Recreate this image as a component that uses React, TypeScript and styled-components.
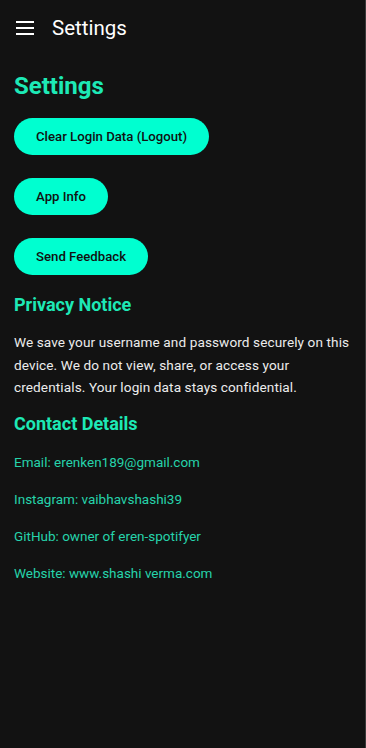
import React from "react";
import styled, { createGlobalStyle } from "styled-components";

const GlobalStyle = createGlobalStyle`
	html, body {
		margin: 0;
		padding: 0;
		background: #121212;
	}
	body {
		font-family: Roboto, "Noto Sans", "Liberation Sans", sans-serif;
	}
`;

const contacts = [
	"Email: erenken189@gmail.com",
	"Instagram: vaibhavshashi39",
	"GitHub: owner of eren-spotifyer",
	"Website: www.shashi verma.com",
];

const buttons = ["Clear Login Data (Logout)", "App Info", "Send Feedback"];

export default function App() {
	return (
		<>
			<GlobalStyle />
			<Screen>
				<TopBar>
					<MenuButton aria-label="menu">
						<svg width="18" height="14" viewBox="0 0 18 14">
							<rect x="0" y="0" width="18" height="2" fill="#fff" />
							<rect x="0" y="6" width="18" height="2" fill="#fff" />
							<rect x="0" y="12" width="18" height="2" fill="#fff" />
						</svg>
					</MenuButton>
					<BarTitle>Settings</BarTitle>
				</TopBar>

				<Content>
					<PageTitle>Settings</PageTitle>
					<ButtonList>
						{buttons.map((b) => (
							<PillButton key={b}>{b}</PillButton>
						))}
					</ButtonList>

					<SectionTitle>Privacy Notice</SectionTitle>
					<Paragraph>
						We save your username and password securely on this device. We do not view, share, or access your
						credentials. Your login data stays confidential.
					</Paragraph>

					<SectionTitle $tight>Contact Details</SectionTitle>
					<ContactList>
						{contacts.map((c) => (
							<ContactItem key={c}>{c}</ContactItem>
						))}
					</ContactList>
				</Content>
			</Screen>
		</>
	);
}

const Screen = styled.div`
	width: 366px;
	height: 748px;
	box-sizing: border-box;
	background: #121212;
	border-right: 1px solid #3a3a3a;
	overflow: hidden;
`;

const TopBar = styled.header`
	display: flex;
	align-items: center;
	height: 56px;
	padding-left: 16px;
`;

const MenuButton = styled.button`
	display: flex;
	align-items: center;
	justify-content: center;
	width: 18px;
	height: 18px;
	padding: 0;
	border: none;
	background: transparent;
`;

const BarTitle = styled.h1`
	margin: 0 0 0 18px;
	font-size: 20.5px;
	font-weight: 400;
	color: #ffffff;
`;

const Content = styled.main`
	padding: 14px 14px 0;
`;

const PageTitle = styled.h2`
	margin: 0;
	font-size: 24px;
	line-height: 32px;
	font-weight: 700;
	color: #1de9b6;
`;

const ButtonList = styled.div`
	display: flex;
	flex-direction: column;
	align-items: flex-start;
	gap: 23px;
	margin-top: 16px;
`;

const PillButton = styled.button`
	height: 37px;
	padding: 0 22px;
	border: none;
	border-radius: 19px;
	background: #00ffd0;
	color: #111;
	font-family: inherit;
	font-size: 13.2px;
	font-weight: 500;
`;

const SectionTitle = styled.h3<{ $tight?: boolean }>`
	margin: ${(p) => (p.$tight ? "13px" : "18px")} 0 0;
	font-size: 18px;
	line-height: 24px;
	font-weight: 700;
	color: #1de9b6;
`;

const Paragraph = styled.p`
	margin: 14px 0 0;
	font-size: 13.6px;
	line-height: 22.5px;
	color: #ececec;
	letter-spacing: 0.1px;
`;

const ContactList = styled.ul`
	list-style: none;
	margin: 16px 0 0;
	padding: 0;
	display: flex;
	flex-direction: column;
	gap: 17px;
`;

const ContactItem = styled.li`
	font-size: 13.5px;
	line-height: 20px;
	color: #26d3ab;
`;
